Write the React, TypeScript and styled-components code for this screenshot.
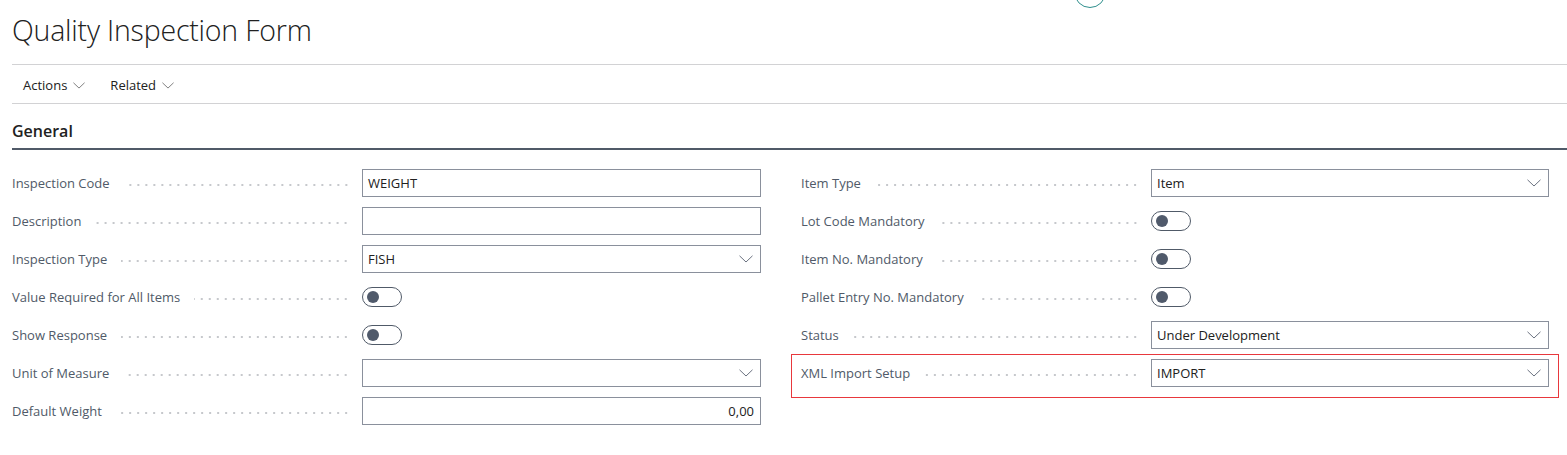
import * as React from 'react';
import styled, {createGlobalStyle} from 'styled-components';

const GlobalStyle = createGlobalStyle`
  html, body {
    margin: 0;
    padding: 0;
    background: #ffffff;
  }
  body {
    font-family: 'Open Sans', 'Segoe UI', sans-serif;
    color: #212121;
    overflow: hidden;
  }
`;

type Field =
  | {kind: 'text'; label: string; value?: string; align?: 'left' | 'right'}
  | {kind: 'select'; label: string; value?: string}
  | {kind: 'toggle'; label: string};

const leftFields: Field[] = [
  {kind: 'text', label: 'Inspection Code', value: 'WEIGHT'},
  {kind: 'text', label: 'Description'},
  {kind: 'select', label: 'Inspection Type', value: 'FISH'},
  {kind: 'toggle', label: 'Value Required for All Items'},
  {kind: 'toggle', label: 'Show Response'},
  {kind: 'select', label: 'Unit of Measure'},
  {kind: 'text', label: 'Default Weight', value: '0,00', align: 'right'},
];

const rightFields: Field[] = [
  {kind: 'select', label: 'Item Type', value: 'Item'},
  {kind: 'toggle', label: 'Lot Code Mandatory'},
  {kind: 'toggle', label: 'Item No. Mandatory'},
  {kind: 'toggle', label: 'Pallet Entry No. Mandatory'},
  {kind: 'select', label: 'Status', value: 'Under Development'},
  {kind: 'select', label: 'XML Import Setup', value: 'IMPORT'},
];

const Chevron = ({size = 14}: {size?: number}) => (
  <svg width={size} height={size / 2 + 1} viewBox="0 0 14 8" fill="none">
    <path d="M0.5 0.8 L7 7 L13.5 0.8" stroke="currentColor" strokeWidth="1" />
  </svg>
);

const FieldControl = ({field}: {field: Field}) => {
  if (field.kind === 'toggle') {
    return (
      <Toggle>
        <Knob />
      </Toggle>
    );
  }
  if (field.kind === 'select') {
    return (
      <Input>
        <InputText>{field.value}</InputText>
        <SelectArrow>
          <Chevron />
        </SelectArrow>
      </Input>
    );
  }
  return (
    <Input>
      <InputText $align={field.align}>{field.value}</InputText>
    </Input>
  );
};

const Column = ({fields, highlight}: {fields: Field[]; highlight?: string}) => (
  <FieldColumn>
    {fields.map((f) => (
      <Row key={f.label} $highlighted={f.label === highlight}>
        <LabelCell>
          <Label>{f.label}</Label>
          <Dots />
        </LabelCell>
        <FieldControl field={f} />
      </Row>
    ))}
  </FieldColumn>
);

const App = () => {
  return (
    <Page>
      <GlobalStyle />
      <TopCircle />
      <Title>Quality Inspection Form</Title>
      <ActionBar>
        <ActionButton>
          Actions
          <ActionChevron>
            <Chevron size={12} />
          </ActionChevron>
        </ActionButton>
        <ActionButton>
          Related
          <ActionChevron>
            <Chevron size={12} />
          </ActionChevron>
        </ActionButton>
      </ActionBar>
      <SectionHeader>General</SectionHeader>
      <FormGrid>
        <Column fields={leftFields} />
        <Column fields={rightFields} highlight="XML Import Setup" />
      </FormGrid>
    </Page>
  );
};

export default App;

const Page = styled.div`
  position: relative;
  width: 1567px;
  height: 455px;
  padding-left: 12px;
  box-sizing: border-box;
`;

const TopCircle = styled.div`
  position: absolute;
  left: 1074px;
  top: -24px;
  width: 32px;
  height: 32px;
  border: 1.5px solid #2f8f8d;
  border-radius: 50%;
  box-sizing: border-box;
`;

const Title = styled.h1`
  margin: 0;
  height: 65px;
  box-sizing: border-box;
  padding-top: 11px;
  font-size: 28.5px;
  font-weight: 300;
  color: #212121;
  letter-spacing: -0.2px;
  border-bottom: 1px solid #d2d2d4;
`;

const ActionBar = styled.div`
  display: flex;
  align-items: center;
  height: 38px;
  padding-left: 11px;
  gap: 25px;
  border-bottom: 1px solid #d2d2d4;
`;

const ActionButton = styled.div`
  display: flex;
  align-items: center;
  gap: 6px;
  font-size: 13px;
  color: #212121;
  padding-top: 2px;
`;

const ActionChevron = styled.span`
  display: flex;
  color: #6b6b6b;
  margin-top: 1px;
`;

const SectionHeader = styled.h2`
  margin: 0;
  height: 46px;
  box-sizing: border-box;
  padding-top: 16px;
  font-size: 16px;
  font-weight: 600;
  color: #212121;
  border-bottom: 2px solid #505a68;
`;

const FormGrid = styled.div`
  display: grid;
  grid-template-columns: 749px 748px;
  column-gap: 40px;
  padding-top: 19px;
`;

const FieldColumn = styled.div`
  display: flex;
  flex-direction: column;
  gap: 10px;
`;

const Row = styled.div<{$highlighted?: boolean}>`
  position: relative;
  display: grid;
  grid-template-columns: 350px 1fr;
  align-items: center;
  height: 28px;

  ${({$highlighted}) =>
    $highlighted &&
    `
    &::after {
      content: '';
      position: absolute;
      left: -10px;
      right: -10px;
      top: -5px;
      bottom: -11px;
      border: 1px solid #e8383d;
      pointer-events: none;
    }
  `}
`;

const LabelCell = styled.div`
  display: flex;
  align-items: center;
  min-width: 0;
  padding-right: 12px;
`;

const Label = styled.span`
  font-size: 13px;
  color: #505a68;
  white-space: nowrap;
  flex-shrink: 0;
  padding-right: 14px;
`;

const Dots = styled.span`
  flex: 1;
  height: 2px;
  margin-top: 3px;
  background-image: radial-gradient(circle, #c6c8cc 0.9px, transparent 1.1px);
  background-size: 8px 2px;
  background-position: right center;
  background-repeat: repeat-x;
`;

const Input = styled.div`
  display: flex;
  align-items: center;
  height: 28px;
  box-sizing: border-box;
  border: 1px solid #8a909c;
  background: #ffffff;
  padding: 0 6px 0 5px;
`;

const InputText = styled.span<{$align?: 'left' | 'right'}>`
  flex: 1;
  font-size: 13px;
  color: #212121;
  text-align: ${({$align}) => $align || 'left'};
  white-space: nowrap;
`;

const SelectArrow = styled.span`
  display: flex;
  color: #6b7280;
  margin-right: 1px;
`;

const Toggle = styled.div`
  position: relative;
  width: 40px;
  height: 20px;
  box-sizing: border-box;
  border: 1px solid #505a68;
  border-radius: 10px;
  display: flex;
  align-items: center;
  padding-left: 4px;
`;

const Knob = styled.span`
  width: 12px;
  height: 12px;
  border-radius: 50%;
  background: #505a6b;
`;
